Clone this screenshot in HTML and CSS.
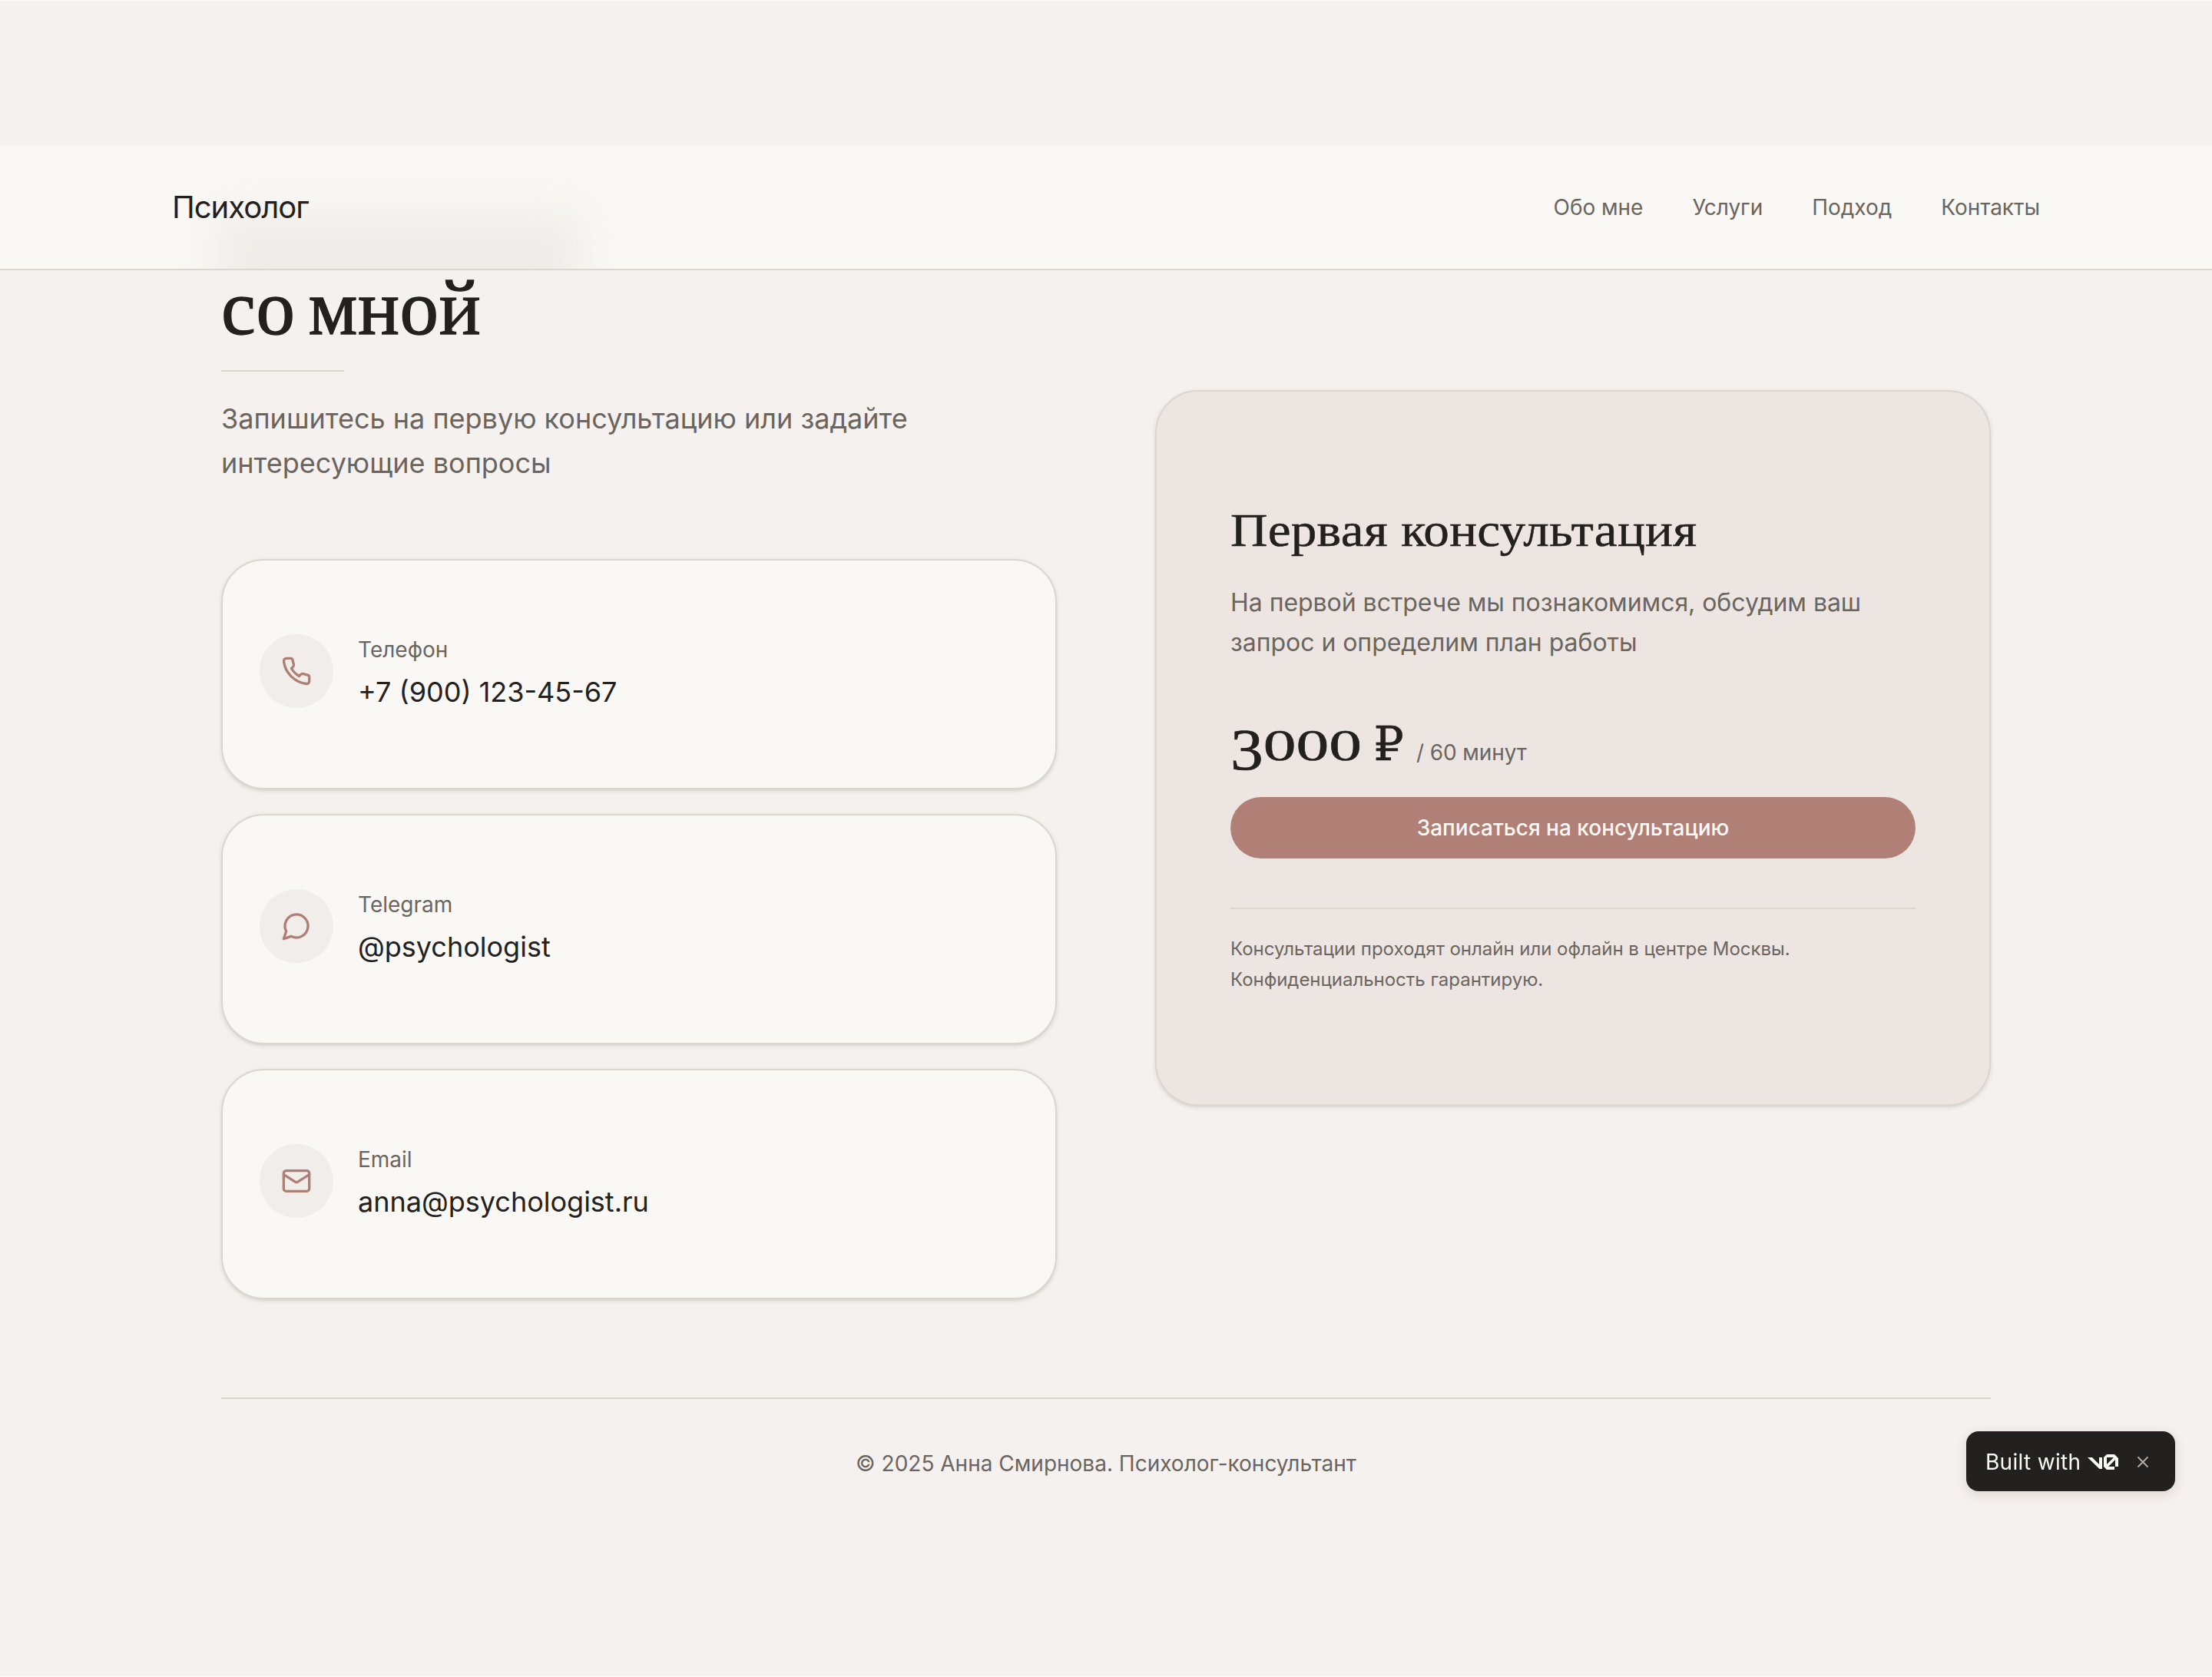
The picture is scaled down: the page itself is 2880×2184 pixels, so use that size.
FILE: index.html
```
<!DOCTYPE html>
<html lang="ru">
<head>
    <meta charset="UTF-8">
    <meta name="viewport" content="width=device-width, initial-scale=1.0">
    <title>Психолог</title>
    <link rel="stylesheet" href="styles.css">
</head>
<body>
<header class="header">
    <div class="heading-glow"></div>
    <a class="logo" href="#">Психолог</a>
    <nav class="nav">
        <a href="#about">Обо мне</a>
        <a href="#services">Услуги</a>
        <a href="#approach">Подход</a>
        <a href="#contacts">Контакты</a>
    </nav>
</header>

<main class="container" id="contacts">
    <div class="columns">
        <section class="contacts">
            <h2>со мной</h2>
            <div class="line"></div>
            <p class="lead">Запишитесь на первую консультацию или задайте интересующие вопросы</p>

            <div class="card">
                <div class="icon">
                    <svg viewBox="0 0 24 24"><path d="M22 16.92v3a2 2 0 0 1-2.18 2 19.79 19.79 0 0 1-8.63-3.07 19.5 19.5 0 0 1-6-6 19.79 19.79 0 0 1-3.07-8.67A2 2 0 0 1 4.11 2h3a2 2 0 0 1 2 1.72 12.84 12.84 0 0 0 .7 2.81 2 2 0 0 1-.45 2.11L8.09 9.91a16 16 0 0 0 6 6l1.27-1.27a2 2 0 0 1 2.11-.45 12.84 12.84 0 0 0 2.81.7A2 2 0 0 1 22 16.92z"/></svg>
                </div>
                <div>
                    <div class="label">Телефон</div>
                    <div class="value">+7 (900) 123-45-67</div>
                </div>
            </div>
            <div class="card">
                <div class="icon">
                    <svg viewBox="0 0 24 24"><path d="M7.9 20A9 9 0 1 0 4 16.1L2 22Z"/></svg>
                </div>
                <div>
                    <div class="label">Telegram</div>
                    <div class="value">@psychologist</div>
                </div>
            </div>
            <div class="card">
                <div class="icon">
                    <svg viewBox="0 0 24 24"><rect x="2" y="4" width="20" height="16" rx="2"/><path d="m22 7-8.97 5.7a1.94 1.94 0 0 1-2.06 0L2 7"/></svg>
                </div>
                <div>
                    <div class="label">Email</div>
                    <div class="value">anna@psychologist.ru</div>
                </div>
            </div>
        </section>

        <section class="offer">
            <h3>Первая консультация</h3>
            <p class="offer-text">На первой встрече мы познакомимся, обсудим ваш запрос и определим план работы</p>
            <div class="price">
                <span class="amount"><span class="digits"><span class="low">3</span>000</span><span class="rub">₽</span></span>
                <span class="per">/ 60 минут</span>
            </div>
            <button class="btn">Записаться на консультацию</button>
            <p class="note">Консультации проходят онлайн или офлайн в центре Москвы. Конфиденциальность гарантирую.</p>
        </section>
    </div>

    <footer class="footer">© 2025 Анна Смирнова. Психолог-консультант</footer>
</main>

<div class="badge">
    <span>Built with</span>
    <svg class="v0" viewBox="0 0 40 20"><path d="M0 4h6l9 9V4h4v15h-3.500z"/><path fill-rule="evenodd" d="M25 0h10l5 5v11h-4V7L27 16h8v4H25l-4-4V4zM25 4v9l9-9z"/></svg>
    <svg class="close" viewBox="0 0 14 14"><path d="M0.500 0.500l13 13M13.500 0.500l-13 13"/></svg>
</div>
</body>
</html>
```
FILE: styles.css
```
* {
    box-sizing: border-box;
}
body {
    margin: 0;
    height: 2184px;
    padding-top: 188px;
    overflow: hidden;
    background-color: #f5f1ee;
    border-top: 2px solid #faf9f5;
    border-bottom: 2px solid #faf9f5;
    color: #23211e;
    font-family: Inter, "Liberation Sans", sans-serif;
}
h2, h3, p {
    margin: 0;
    font-weight: 400;
}
.header {
    position: relative;
    display: flex;
    justify-content: space-between;
    align-items: center;
    height: 162px;
    padding: 0 224px;
    background-color: #f9f8f4;
    border-bottom: 2px solid #dad6d0;
    overflow: hidden;
}
/* heading scrolled under the bar */
.heading-glow {
    position: absolute;
    left: 286px;
    top: 92px;
    width: 466px;
    height: 110px;
    background-color: #efebe8;
    filter: blur(25px);
}
.logo {
    position: relative;
    margin-bottom: 2px;
    color: #23211e;
    font-size: 40px;
    text-decoration: none;
    letter-spacing: -1px;
}
.nav {
    display: flex;
    gap: 64px;
}
.nav a {
    color: #6b6560;
    font-size: 28px;
    letter-spacing: -0.04px;
    text-decoration: none;
}
.container {
    width: 2304px;
    margin: 0 auto;
}
.columns {
    display: grid;
    grid-template-columns: 1fr 1fr;
    gap: 128px;
    align-items: start;
}
h2, h3, .amount {
    font-family: Georgia, "Liberation Serif", serif;
}
h2 {
    height: 130px;
    font-size: 101px;
    line-height: 98px;
    letter-spacing: 0.6px;
    word-spacing: -9px;
    -webkit-text-stroke: 1.3px #23211e;
}
.line {
    width: 160px;
    height: 2px;
    background-color: #dad6d0;
}
.lead {
    margin: 32px 0 96px;
    color: #6b6560;
    font-size: 36px;
    line-height: 58px;
}
.card {
    display: flex;
    align-items: center;
    gap: 32px;
    height: 300px;
    margin-bottom: 32px;
    padding: 0 48px 8px;
    background-color: #faf8f4;
    border: 2px solid #dad6d0;
    border-radius: 56px;
    box-shadow: 0 2px 6px rgba(0, 0, 0, 0.1), 0 2px 4px -2px rgba(0, 0, 0, 0.1);
}
.icon {
    display: flex;
    align-items: center;
    justify-content: center;
    width: 96px;
    height: 96px;
    background-color: #f1edea;
    border-radius: 50%;
}
.icon svg {
    width: 40px;
    height: 40px;
    fill: none;
    stroke: #ae7f75;
    stroke-width: 2;
    stroke-linecap: round;
    stroke-linejoin: round;
}
.label {
    margin: 6px 0 7px;
    color: #6b6560;
    font-size: 28px;
    line-height: 40px;
}
.value {
    font-size: 36px;
    line-height: 56px;
}
.offer {
    height: 932px;
    margin-top: 156px;
    padding: 142px 96px 0;
    background-color: #ede5e2;
    border: 2px solid #dad6d0;
    border-radius: 56px;
    box-shadow: 0 2px 6px rgba(0, 0, 0, 0.1), 0 2px 4px -2px rgba(0, 0, 0, 0.1);
}
h3 {
    font-size: 62px;
    line-height: 76px;
    letter-spacing: 0.2px;
    white-space: nowrap;
    transform: scaleX(1.084);
    transform-origin: left;
    -webkit-text-stroke: 0.5px #23211e;
}
.offer-text {
    margin-top: 31px;
    color: #6b6560;
    font-size: 32px;
    letter-spacing: -0.04px;
    line-height: 52px;
}
.price {
    display: flex;
    align-items: baseline;
    gap: 16px;
    height: 107px;
    margin-top: 68px;
    line-height: 80px;
}
.amount {
    display: flex;
    align-items: baseline;
    width: 226px;
    font-size: 72px;
}
/* old-style figures: wide, x-height tall, the 3 hangs below the line */
.digits {
    display: inline-block;
    width: 190px;
    font-size: 57px;
    transform: scaleX(1.5);
    transform-origin: left;
    -webkit-text-stroke: 0.5px #23211e;
}
.low {
    display: inline-block;
    transform: translateY(6px) scaleY(1.33);
}
.rub {
    font-family: "DejaVu Serif", serif;
    font-size: 62px;
    line-height: 60px;
    -webkit-text-stroke: 0.5px #23211e;
}
.per {
    color: #6b6560;
    font-size: 28px;
    letter-spacing: -0.1px;
}
.btn {
    display: block;
    width: 100%;
    height: 80px;
    border: none;
    border-radius: 40px;
    background-color: #b08076;
    color: #faf9f5;
    font-family: inherit;
    font-size: 28px;
    font-weight: 500;
}
.note {
    margin-top: 64px;
    padding-top: 32px;
    border-top: 2px solid #dad6d0;
    color: #6b6560;
    font-size: 24px;
    letter-spacing: -0.03px;
    line-height: 40px;
}
.footer {
    margin-top: 96px;
    padding-top: 64px;
    border-top: 2px solid #dad6d0;
    color: #6b6560;
    font-size: 28px;
    line-height: 40px;
    text-align: center;
}
.badge {
    position: fixed;
    left: 2560px;
    top: 1864px;
    display: flex;
    align-items: center;
    width: 272px;
    height: 78px;
    padding: 2px 0 0 25px;
    background-color: #23211f;
    border-radius: 16px;
    box-shadow: 0 4px 16px rgba(60, 20, 10, 0.12);
    color: #faf9f5;
    font-size: 28px;
    letter-spacing: 0.3px;
}
.v0 {
    width: 40px;
    height: 20px;
    margin-left: 9px;
    fill: #faf9f5;
}
.close {
    width: 14px;
    height: 14px;
    margin-left: 25px;
    overflow: visible;
    fill: none;
    stroke: #b8afa9;
    stroke-width: 1.8;
}
```
